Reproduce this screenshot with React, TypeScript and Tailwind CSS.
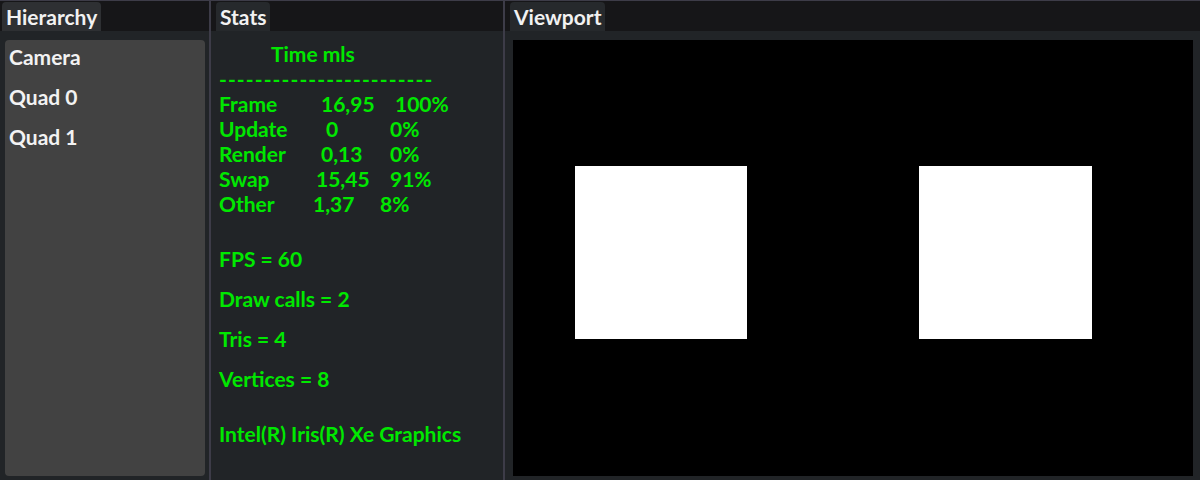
import React from 'react';

const font = "font-['Lato','Noto_Sans',sans-serif] font-bold";

const rows = [
  { label: 'Frame', labelW: 'w-[102px]', num: '16,95', numW: 'w-[74px]', pct: '100%' },
  { label: 'Update', labelW: 'w-[107px]', num: '0', numW: 'w-[64px]', pct: '0%' },
  { label: 'Render', labelW: 'w-[102px]', num: '0,13', numW: 'w-[69px]', pct: '0%' },
  { label: 'Swap', labelW: 'w-[97px]', num: '15,45', numW: 'w-[74px]', pct: '91%' },
  { label: 'Other', labelW: 'w-[94px]', num: '1,37', numW: 'w-[67px]', pct: '8%' },
];

const Tab: React.FC<{ title: string; active?: boolean; offset: string }> = ({ title, active, offset }) => (
  <div className={`h-[30px] pt-[1px] ${offset} flex`}>
    <div
      className={`h-[29px] px-[4px] rounded-t-[4px] flex items-center text-[21px] text-[#f2f2f2] ${
        active ? 'bg-[#2e3033]' : 'bg-[#26292c]'
      }`}
    >
      {title}
    </div>
  </div>
);

export default function App() {
  return (
    <div className={`w-[1200px] h-[480px] bg-[#161618] border-t border-[#3d3c48] flex ${font}`}>
      {/* Hierarchy */}
      <div className="w-[209px] flex flex-col">
        <Tab title="Hierarchy" active offset="pl-[2px]" />
        <div className="flex-1 bg-[#212427] pt-[9px] pl-[5px] pr-[4px] pb-[4px]">
          <div className="h-full bg-[#424242] rounded-[4px] pl-[4px] pt-[4px] text-[21px] text-[#f2f2f2]">
            <div className="h-[40px] leading-[26px]">Camera</div>
            <div className="h-[40px] leading-[26px]">Quad 0</div>
            <div className="h-[40px] leading-[26px]">Quad 1</div>
          </div>
        </div>
      </div>

      <div className="w-[2px] bg-[#3d3c48]" />

      {/* Stats */}
      <div className="w-[292px] flex flex-col">
        <Tab title="Stats" offset="pl-[5px]" />
        <div className="flex-1 bg-[#212427] pt-[10px] pl-[8px] text-[21px] text-[#00e800]">
          <div className="h-[25px] leading-[25px] pl-[52px]">Time mls</div>
          <div className="h-[25px] leading-[25px] tracking-[1.1px]">------------------------</div>
          {rows.map((r) => (
            <div key={r.label} className="h-[25px] leading-[25px] flex">
              <span className={r.labelW}>{r.label}</span>
              <span className={r.numW}>{r.num}</span>
              <span>{r.pct}</span>
            </div>
          ))}
          <div className="h-[25px] leading-[25px] mt-[30px]">FPS = 60</div>
          <div className="h-[25px] leading-[25px] mt-[15px]">Draw calls = 2</div>
          <div className="h-[25px] leading-[25px] mt-[15px]">Tris = 4</div>
          <div className="h-[25px] leading-[25px] mt-[15px]">Vertices = 8</div>
          <div className="h-[25px] leading-[25px] mt-[30px]">Intel(R) Iris(R) Xe Graphics</div>
        </div>
      </div>

      <div className="w-[2px] bg-[#3d3c48]" />

      {/* Viewport */}
      <div className="flex-1 flex flex-col">
        <Tab title="Viewport" offset="pl-[5px]" />
        <div className="flex-1 bg-[#212427] pt-[9px] pl-[8px] pr-[7px] pb-[4px]">
          <div className="h-full bg-black pt-[126px] pl-[62px] flex gap-[172px] items-start">
            <div className="w-[172px] h-[173px] bg-white" />
            <div className="w-[173px] h-[173px] bg-white" />
          </div>
        </div>
      </div>
    </div>
  );
}
